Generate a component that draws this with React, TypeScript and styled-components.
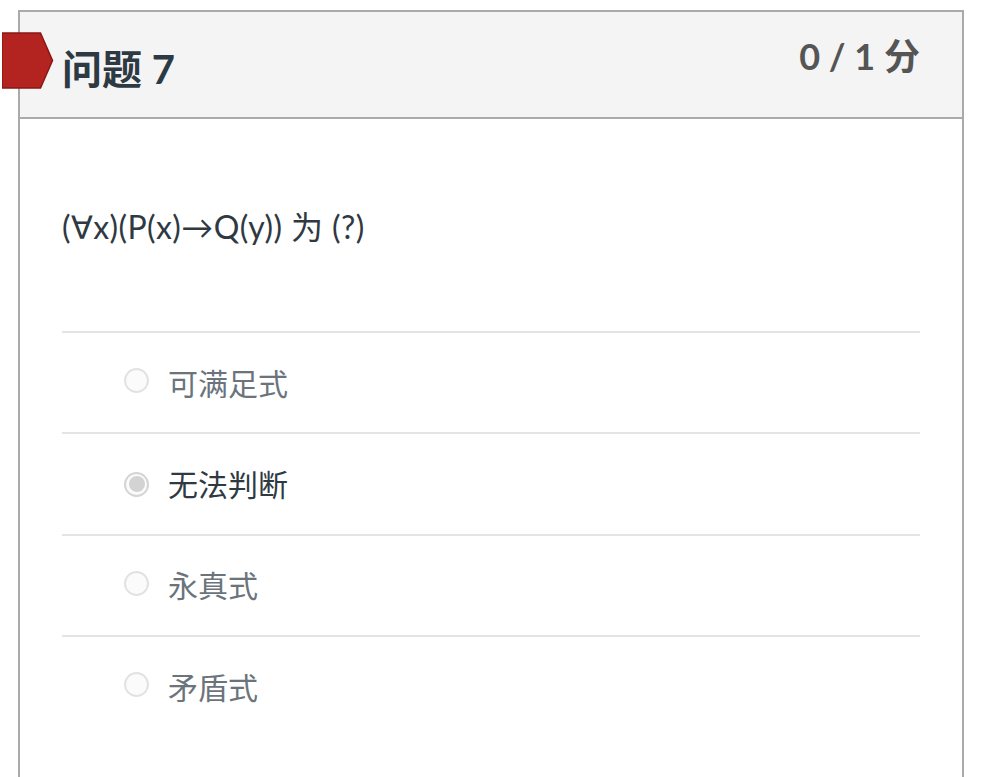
import React from "react";
import styled, { createGlobalStyle } from "styled-components";

const Global = createGlobalStyle`
  html, body { margin: 0; padding: 0; background: #ffffff; }
  body { font-family: Lato, "Noto Sans CJK SC", sans-serif; }
  * { box-sizing: border-box; }
`;

const Card = styled.section`
  position: relative;
  margin: 10px 0 0 18px;
  width: 946px;
  border: 2px solid #aaaaaa;
  background: #ffffff;
`;

const Marker = styled.svg`
  position: absolute;
  left: -18px;
  top: 20px;
`;

const Header = styled.header`
  display: flex;
  justify-content: space-between;
  align-items: flex-start;
  height: 107px;
  padding: 0 42px;
  background: #f4f4f4;
  border-bottom: 2px solid #aaaaaa;
`;

const Title = styled.h2`
  margin: 37px 0 0;
  font-size: 40px;
  line-height: 40px;
  font-weight: 700;
  color: #2d3a43;
`;

const Score = styled.div`
  margin-top: 26px;
  font-size: 36px;
  line-height: 36px;
  font-weight: 700;
  color: #555555;
`;

const Body = styled.div`
  padding: 87px 42px 60px;
`;

const Question = styled.p`
  margin: 0 0 83px;
  font-family: Lato, "DejaVu Sans", "Noto Sans CJK SC", sans-serif;
  font-size: 32px;
  line-height: 42px;
  letter-spacing: 0.4px;
  color: #2f3942;
`;

const Options = styled.ul`
  list-style: none;
  margin: 0;
  padding: 0;
`;

const Option = styled.li`
  display: flex;
  align-items: center;
  gap: 19px;
  height: 101.4px;
  padding-left: 62px;
  border-top: 2px solid #e4e4e4;
`;

const Radio = styled.span<{ $checked?: boolean }>`
  position: relative;
  flex: none;
  width: 25px;
  height: 25px;
  margin-top: ${(p) => (p.$checked ? "0" : "-4px")};
  border-radius: 50%;
  border: 2px solid ${(p) => (p.$checked ? "#d4d4d4" : "#e2e2e2")};
  background: #fbfbfb;
  &::after {
    content: "";
    display: ${(p) => (p.$checked ? "block" : "none")};
    position: absolute;
    left: 2.5px;
    top: 2.5px;
    width: 16px;
    height: 16px;
    border-radius: 50%;
    background: #d3d3d3;
  }
`;

const Label = styled.span<{ $checked?: boolean }>`
  font-size: 30px;
  line-height: 40px;
  color: ${(p) => (p.$checked ? "#2f3942" : "#6b747c")};
`;

const options = [
  { text: "可满足式", checked: false },
  { text: "无法判断", checked: true },
  { text: "永真式", checked: false },
  { text: "矛盾式", checked: false },
];

export default function App() {
  return (
    <>
      <Global />
      <Card>
        <Marker width="52" height="58" viewBox="0 0 52 58">
          <polygon
            points="0,1 38.5,1 50.5,28.5 38.5,56 0,56"
            fill="#b32320"
            stroke="#8a1714"
            strokeWidth="1.5"
          />
        </Marker>
        <Header>
          <Title>问题 7</Title>
          <Score>0 / 1 分</Score>
        </Header>
        <Body>
          <Question>(∀x)(P(x)→Q(y)) 为 (?)</Question>
          <Options>
            {options.map((o) => (
              <Option key={o.text}>
                <Radio $checked={o.checked} />
                <Label $checked={o.checked}>{o.text}</Label>
              </Option>
            ))}
          </Options>
        </Body>
      </Card>
    </>
  );
}
